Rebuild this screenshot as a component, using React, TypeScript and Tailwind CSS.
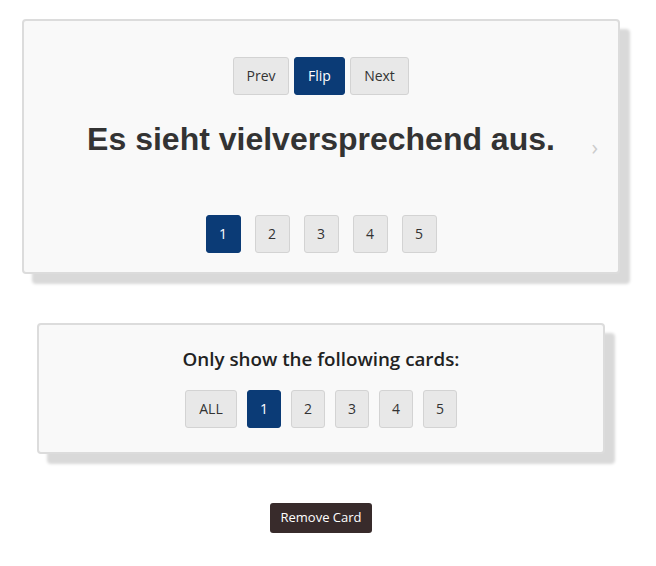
import { FC } from "react";

const ui = "font-['Open_Sans','Noto_Sans',sans-serif]";

interface INumBtn {
    label: string,
    active?: boolean,
    className?: string,
}
const NumBtn: FC<INumBtn> = ({ label, active, className }) => (
    <button
        className={`${className ?? ""} h-[38px] rounded-[3px] border text-[14px] leading-none ${
            active ? "bg-[#0b3b76] border-[#0b3b76] text-white" : "bg-[#e8e8e8] border-[#d3d3d3] text-[#333]"
        }`}
    >
        {label}
    </button>
);

export default function App() {
    return (
        <div className={`${ui} w-[642px] flex flex-col items-center pt-[19px]`}>
            {/* flashcard */}
            <div className="relative w-[598px] h-[255px] bg-[#f9f9f9] border-2 border-[#dcdcdc] rounded-[4px] shadow-[10px_10px_3px_#d9d9d9] flex flex-col items-center pt-[36px]">
                <div className="flex gap-[5px]">
                    <NumBtn label="Prev" className="w-[56px]" />
                    <NumBtn label="Flip" active className="w-[51px]" />
                    <NumBtn label="Next" className="w-[59px]" />
                </div>
                <h1 className="mt-[24px] font-['Liberation_Sans',Arial,sans-serif] font-bold text-[32px] leading-[40px] text-[#333]">
                    Es sieht vielversprechend aus.
                </h1>
                <span className="absolute right-[20px] top-[114px] text-[#cccccc] text-[22px] leading-none">›</span>
                <div className="mt-[56px] flex gap-[14px]">
                    {["1", "2", "3", "4", "5"].map((n) => (
                        <NumBtn key={n} label={n} active={n === "1"} className="w-[35px]" />
                    ))}
                </div>
            </div>

            {/* filter */}
            <div className="mt-[49px] w-[568px] h-[131px] bg-[#f9f9f9] border-2 border-[#dcdcdc] rounded-[4px] shadow-[10px_10px_3px_#d9d9d9] flex flex-col items-center pt-[20px]">
                <p className="text-[18.8px] font-semibold text-[#222] leading-[28px]">Only show the following cards:</p>
                <div className="mt-[17px] flex gap-[10px]">
                    <NumBtn label="ALL" className="w-[52px]" />
                    {["1", "2", "3", "4", "5"].map((n) => (
                        <NumBtn key={n} label={n} active={n === "1"} className="w-[34px]" />
                    ))}
                </div>
            </div>

            <button className="mt-[49px] h-[30px] px-[10px] rounded-[3px] bg-[#382b2b] text-white text-[13px]">
                Remove Card
            </button>
        </div>
    );
}
